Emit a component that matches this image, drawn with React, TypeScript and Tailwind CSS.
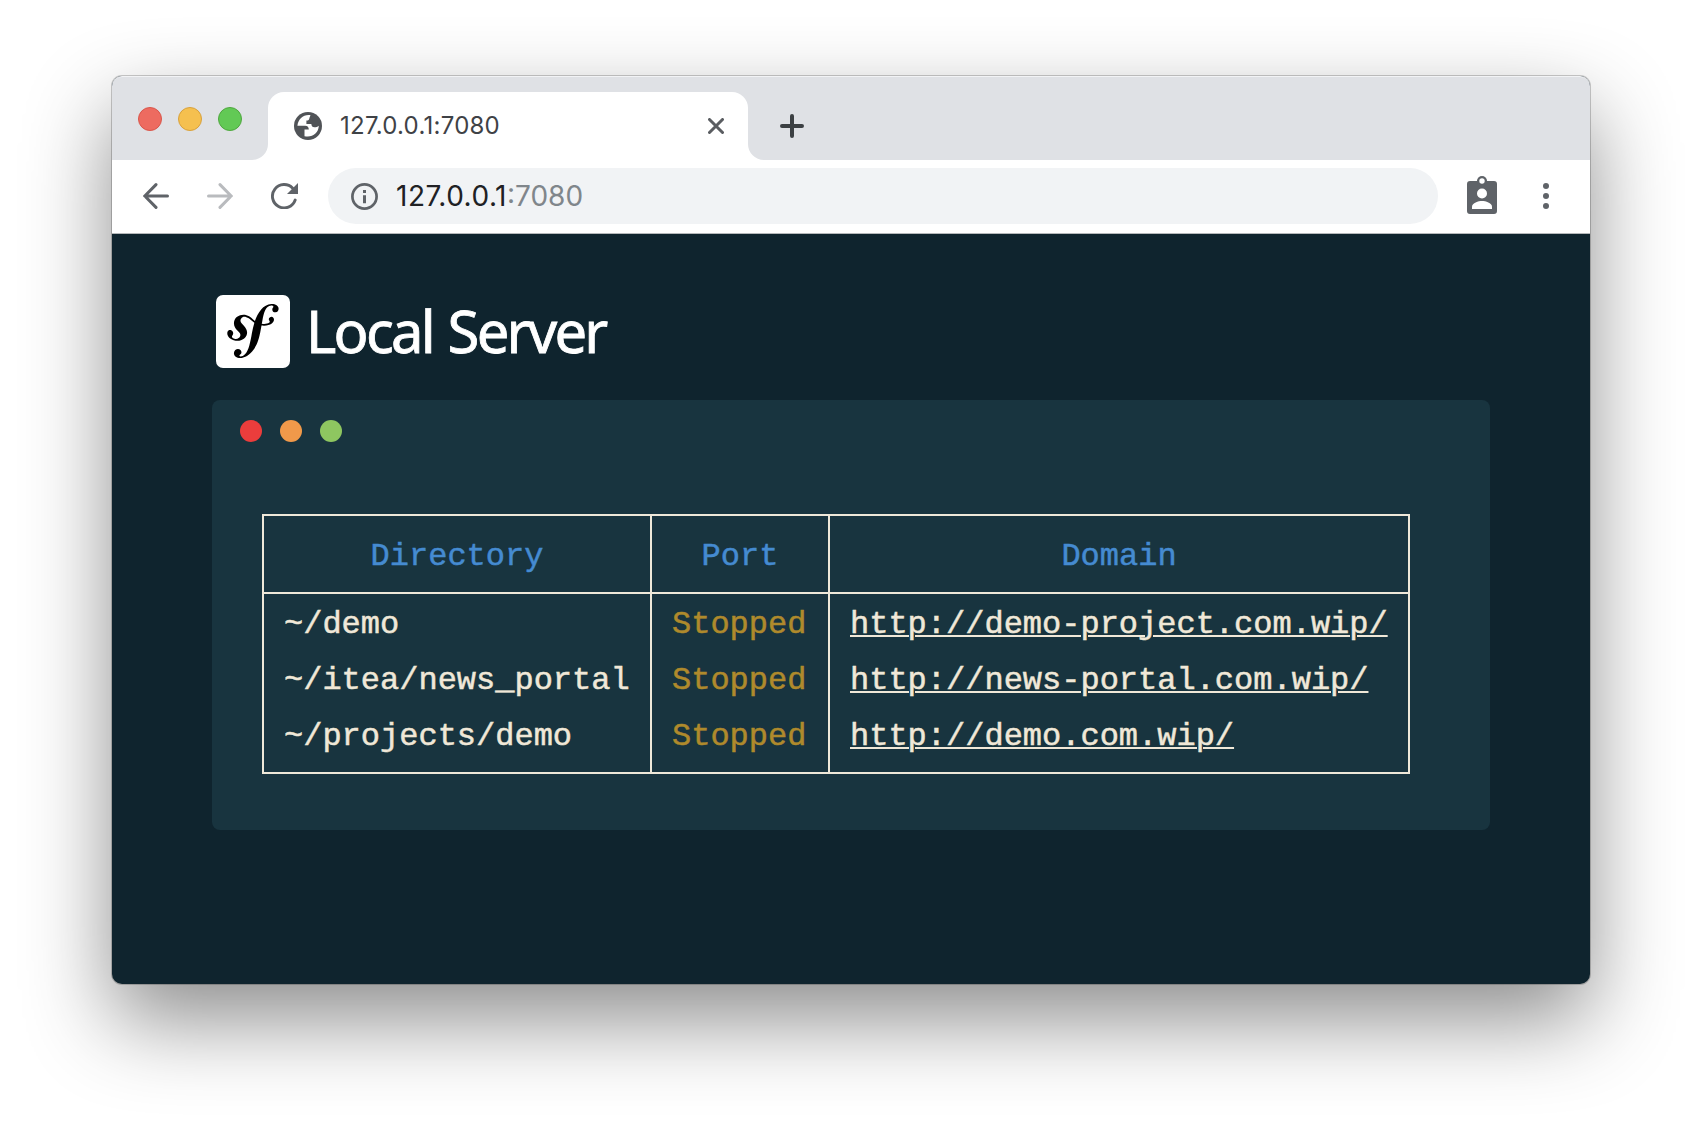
import { type ReactNode } from "react";

type Site = {
  directory: string;
  status: string;
  domain: string;
};

const SITES: Site[] = [
  { directory: "~/demo", status: "Stopped", domain: "http://demo-project.com.wip/" },
  { directory: "~/itea/news_portal", status: "Stopped", domain: "http://news-portal.com.wip/" },
  { directory: "~/projects/demo", status: "Stopped", domain: "http://demo.com.wip/" },
];

function TabStrip() {
  return (
    <div className="flex h-[84px] items-end rounded-t-[10px] border-t border-[#f2f3f5] bg-[#dfe1e5]">
      <div className="flex h-[83px] w-[140px] gap-4 pl-[26px] pt-[30px]">
        <span className="h-6 w-6 rounded-full border border-[#d9564b] bg-[#ed6b60]" />
        <span className="h-6 w-6 rounded-full border border-[#d8a13d] bg-[#f5c04f]" />
        <span className="h-6 w-6 rounded-full border border-[#4fa73f] bg-[#62c955]" />
      </div>
      <svg className="h-4 w-4" viewBox="0 0 16 16" fill="#fff">
        <path d="M16 0v16H0A16 16 0 0 0 16 0z" />
      </svg>
      <div className="flex h-[68px] w-[480px] items-center rounded-t-2xl bg-white pl-[26px] pr-6">
        <svg className="h-7 w-7" viewBox="0 0 28 28">
          <circle cx="14" cy="14" r="14" fill="#505357" />
          <path
            d="M16.500 3.200C9.500 2.200 4.200 7 3.400 13.800h7.800c2.400 0 3.600 1.400 3.600 3.700h-4.300v6.700C18 26 24.500 21.500 24.800 13.800c-1.300 1.300-2.700 1.500-4.300 1.500-2.200 0-2.800-1-3.200-3.300h-4.900V8.500c2 0 3-1 3-2.600z"
            fill="#fff"
          />
        </svg>
        <span className="ml-[18px] flex-1 font-[Inter] text-[24px] leading-none tracking-[0.25px] text-[#3f4246]">
          127.0.0.1:7080
        </span>
        <svg className="h-4 w-4" viewBox="0 0 16 16" stroke="#5a5d61" strokeWidth="3" strokeLinecap="round">
          <path d="M1.500 1.500l13 13M14.500 1.500l-13 13" />
        </svg>
      </div>
      <svg className="h-4 w-4" viewBox="0 0 16 16" fill="#fff">
        <path d="M0 0v16h16A16 16 0 0 1 0 0z" />
      </svg>
      <svg
        className="mb-[22px] ml-4 h-6 w-6"
        viewBox="0 0 24 24"
        stroke="#3c4043"
        strokeWidth="4"
        strokeLinecap="round"
      >
        <path d="M12 2v20M2 12h20" />
      </svg>
    </div>
  );
}

function Toolbar() {
  return (
    <div className="flex h-[74px] items-center border-b border-[#b5b8ba] bg-white pb-px pl-[31px]">
      <svg
        className="h-[26px] w-[26px]"
        viewBox="0 0 26 26"
        fill="none"
        stroke="#5f6368"
        strokeWidth="3"
        strokeLinecap="round"
      >
        <path d="M24.500 13H2M13 1.600L1.800 13 13 24.400" />
      </svg>
      <svg
        className="ml-[38px] h-[26px] w-[26px]"
        viewBox="0 0 26 26"
        fill="none"
        stroke="#b9bbbe"
        strokeWidth="3"
        strokeLinecap="round"
      >
        <path d="M1.500 13H24M13 1.600L24.200 13 13 24.400" />
      </svg>
      <svg className="ml-[38px] h-[26px] w-[27px]" viewBox="0 0 27 26" fill="none">
        <path d="M24.200 17A11.700 11.700 0 1 1 21.700 5.200" stroke="#5f6368" strokeWidth="2.900" strokeLinecap="round" />
        <path d="M27 0v11H16z" fill="#5f6368" />
      </svg>
      <div className="ml-[30px] flex h-14 w-[1110px] items-center rounded-full bg-[#f1f3f5] pl-[23px]">
        <svg className="h-[27px] w-[27px]" viewBox="0 0 27 27" fill="none">
          <circle cx="13.500" cy="13.500" r="12.100" stroke="#5f6368" strokeWidth="2.700" />
          <path d="M12 7h3v3h-3zM12 12.300h3v8h-3z" fill="#5f6368" />
        </svg>
        <span className="ml-[18px] font-[Inter] text-[28px] leading-none tracking-[0.5px] text-[#202124]">
          127.0.0.1<span className="tracking-normal text-[#80868b]">:7080</span>
        </span>
      </div>
      <svg className="mb-[2px] ml-[29px] h-[38px] w-[30px]" viewBox="0 0 30 38">
        <path
          d="M3 5h7.200a5 5 0 0 1 9.600 0H27a3 3 0 0 1 3 3v27a3 3 0 0 1-3 3H3a3 3 0 0 1-3-3V8a3 3 0 0 1 3-3z"
          fill="#5f6368"
        />
        <circle cx="15" cy="5" r="5" fill="#5f6368" />
        <circle cx="15" cy="5" r="2.700" fill="#fff" />
        <circle cx="15" cy="17.500" r="5" fill="#fff" />
        <path d="M5 33v-2.500C5 27 11.500 25 15 25s10 2 10 5.500V33z" fill="#fff" />
      </svg>
      <svg className="ml-[46px] h-[26px] w-[6px]" viewBox="0 0 6 26" fill="#5f6368">
        <circle cx="3" cy="3" r="3" />
        <circle cx="3" cy="13" r="3" />
        <circle cx="3" cy="23" r="3" />
      </svg>
    </div>
  );
}

function Logo() {
  return (
    <div className="flex h-[74px] items-center">
      <div className="flex h-[73px] w-[74px] items-center justify-center rounded-[7px] bg-white">
        <svg className="h-[54px] w-[52px] overflow-visible" viewBox="4 4.430 15.430 16.240">
          <path d="M17.247 4.439c-1.220.042-2.283.715-3.075 1.644-.878 1.020-1.461 2.229-1.881 3.461-.753-.614-1.332-1.414-2.539-1.761-.966-.297-2.015-.105-2.813.514-.410.319-.710.757-.861 1.254-.360 1.176.381 2.225.719 2.600l.737.790c.150.154.519.560.339 1.138-.193.631-.951 1.037-1.732.799-.348-.106-.848-.366-.734-.730.045-.150.152-.263.210-.391.052-.110.077-.194.095-.242.141-.465-.053-1.070-.551-1.223-.465-.143-.939-.030-1.125.566-.209.680.117 1.913 1.860 2.449 2.040.628 3.765-.484 4.009-1.932.153-.907-.255-1.582-1.006-2.447l-.612-.677c-.371-.370-.497-1.002-.114-1.485.324-.409.785-.584 1.539-.379 1.103.300 1.594 1.063 2.412 1.680-.338 1.110-.560 2.223-.759 3.222l-.123.746c-.585 3.070-1.033 4.757-2.194 5.726-.234.166-.570.416-1.073.434-.266.005-.352-.176-.355-.257-.006-.184.150-.271.255-.353.154-.083.390-.224.372-.674-.016-.532-.456-.994-1.094-.973-.477.017-1.203.465-1.176 1.286.028.850.819 1.485 2.012 1.444.638-.021 2.062-.281 3.464-1.949 1.633-1.911 2.090-4.101 2.434-5.706l.383-2.116c.213.024.441.042.690.048 2.032.044 3.049-1.010 3.064-1.776.010-.464-.304-.921-.744-.910-.386.009-.718.278-.806.654-.094.428.646.813.068 1.189-.410.266-1.146.452-2.184.300l.188-1.042c.386-1.976.859-4.407 2.661-4.467.132-.007.612.006.623.323.003.105-.022.134-.147.375-.115.155-.174.345-.168.537.017.504.400.836.957.816.743-.023.955-.748.945-1.119-.032-.874-.952-1.424-2.170-1.386z" />
        </svg>
      </div>
      <h1 className="ml-[16px] whitespace-nowrap font-['Noto_Sans'] text-[58px] font-normal leading-[74px] tracking-[-2.800px] text-white [-webkit-text-stroke:0.8px_#fff] [word-spacing:2.500px]">
        Local Server
      </h1>
    </div>
  );
}

function HeadCell({ children }: { children: ReactNode }) {
  return <th className="border-2 border-[#eee8d9] px-0 pb-0 pt-[5px] font-normal text-[#458bd1]">{children}</th>;
}

function SiteTable() {
  return (
    <table className="w-[1148px] table-fixed border-collapse border-2 border-[#eee8d9] font-['Liberation_Mono'] text-[32px] leading-[50px] text-[#f0e8d8] [-webkit-text-stroke:0.5px]">
      <colgroup>
        <col className="w-[388px]" />
        <col className="w-[178px]" />
        <col />
      </colgroup>
      <thead>
        <tr className="h-[78px]">
          <HeadCell>Directory</HeadCell>
          <HeadCell>Port</HeadCell>
          <HeadCell>Domain</HeadCell>
        </tr>
      </thead>
      <tbody>
        {SITES.map((site) => (
          <tr key={site.directory} className="h-14 last:h-[67px]">
            <td className="border-x-2 border-[#eee8d9] pb-0 pl-5 pt-[6px] align-top">{site.directory}</td>
            <td className="border-x-2 border-[#eee8d9] pb-0 pl-5 pt-[6px] align-top text-[#af8a2c]">{site.status}</td>
            <td className="border-x-2 border-[#eee8d9] pb-0 pl-5 pt-[6px] align-top">
              <a href={site.domain} className="underline decoration-2 underline-offset-2">
                {site.domain}
              </a>
            </td>
          </tr>
        ))}
      </tbody>
    </table>
  );
}

function Terminal() {
  return (
    <div className="mt-8 h-[430px] w-[1278px] rounded-lg bg-[#18343f] pt-5">
      <div className="flex gap-[18px] pl-7">
        <span className="h-[22px] w-[22px] rounded-full bg-[#eb3d3c]" />
        <span className="h-[22px] w-[22px] rounded-full bg-[#f0994a]" />
        <span className="h-[22px] w-[22px] rounded-full bg-[#8ec660]" />
      </div>
      <div className="pl-[50px] pt-[72px]">
        <SiteTable />
      </div>
    </div>
  );
}

export default function App() {
  return (
    <div className="h-[1132px] w-[1702px] overflow-hidden bg-white pl-28 pt-[76px]">
      <div className="h-[908px] w-[1478px] rounded-[10px] bg-[#0f242e] shadow-[0_0_0_1px_rgba(0,0,0,0.2),0_36px_86px_rgba(0,0,0,0.45)]">
        <TabStrip />
        <Toolbar />
        <main className="pl-[100px] pt-[60px]">
          <div className="pl-1">
            <Logo />
          </div>
          <Terminal />
        </main>
      </div>
    </div>
  );
}
